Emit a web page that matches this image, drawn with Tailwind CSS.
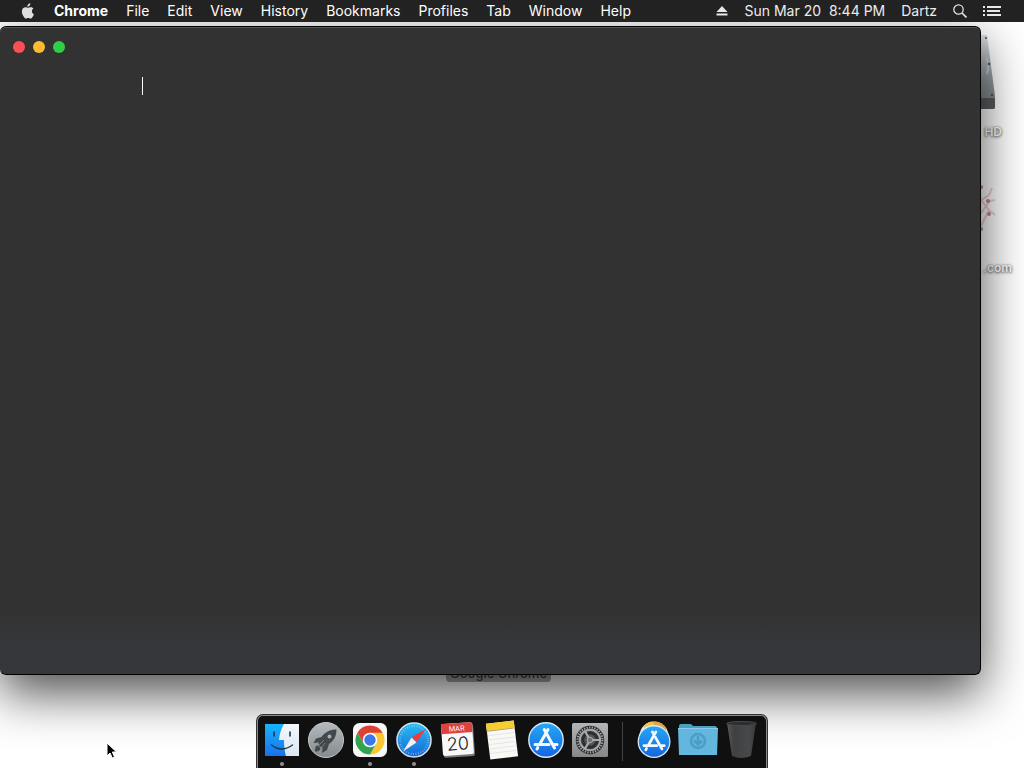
<!DOCTYPE html>
<html lang="en">
<head>
<meta charset="utf-8">
<title>Desktop</title>
<script src="https://cdn.jsdelivr.net/npm/@tailwindcss/browser@4"></script>
</head>
<body class="h-screen overflow-hidden bg-white font-['Inter','Liberation_Sans',sans-serif]">
<div class="relative flex h-full flex-col overflow-hidden">

  <!-- Menu bar -->
  <header class="z-30 flex h-[22px] shrink-0 items-center justify-between bg-[#222222] pr-[23px] pl-5 text-sm text-white">
    <nav class="flex items-center gap-[18px] whitespace-nowrap" aria-label="Application menu">
      <button class="h-4 w-4" aria-label="Apple menu">
        <svg viewBox="0 0 16 16" class="h-4 w-4" fill="#dedede"><path d="M10.300.2c.1 1-.3 1.900-.8 2.500-.6.7-1.400 1.100-2.200 1.100-.1-.9.3-1.800.8-2.400C8.700.7 9.600.3 10.300.2zM13.500 5.600c-1 .6-1.600 1.500-1.600 2.700 0 1.400.8 2.500 2 3-.3 1-.8 1.900-1.400 2.700-.6.9-1.200 1.600-2.100 1.600-.9 0-1.200-.5-2.200-.5s-1.300.5-2.200.5c-.9 0-1.600-.9-2.200-1.800C2.400 11.900 1.400 9 2.100 6.900c.5-1.600 1.800-2.700 3.300-2.700 1 0 1.900.6 2.600.6.600 0 1.700-.7 3-.6.600 0 1.800.2 2.500 1.400z"/></svg>
      </button>
      <button class="font-bold">Chrome</button>
      <button>File</button>
      <button>Edit</button>
      <button>View</button>
      <button>History</button>
      <button>Bookmarks</button>
      <button>Profiles</button>
      <button>Tab</button>
      <button>Window</button>
      <button>Help</button>
    </nav>
    <div class="flex items-center gap-4 whitespace-nowrap text-[#ececec]">
      <button aria-label="Eject"><svg viewBox="0 0 12 12" class="h-3 w-3" fill="#e8e8e8"><path d="M6 1l5.500 6H.5zM.5 8.500h11v2H.5z"/></svg></button>
      <time class="whitespace-pre">Sun Mar 20  8:44 PM</time>
      <button>Dartz</button>
      <button aria-label="Search"><svg viewBox="0 0 14 14" class="h-3.5 w-3.5" fill="none" stroke="#e0e0e0" stroke-width="1.300"><circle cx="5.500" cy="5.500" r="4.700"/><path d="M9 9l4.500 4.500" stroke-width="1.700"/></svg></button>
      <button aria-label="Notification Center"><svg viewBox="0 0 18 12" class="h-3 w-[18px]" fill="#e8e8e8"><path d="M0 1h2v2H0zM0 5h2v2H0zM0 9h2v2H0zM4 1h14v2H4zM4 5h13v2H4zM4 9h14v2H4z"/></svg></button>
    </div>
  </header>

  <!-- Desktop icons -->
  <div class="absolute top-[34px] right-3 flex w-24 flex-col items-center text-xs font-semibold text-white">
    <svg viewBox="0 0 66 76" class="mr-1 h-[76px] w-[66px]">
      <defs><linearGradient id="hd" x1="0" y1="0" x2="0" y2="1"><stop offset="0" stop-color="#dfe3e6"/><stop offset=".6" stop-color="#959da2"/><stop offset="1" stop-color="#7d8285"/></linearGradient></defs>
      <path d="M8 1h50l8 61v11q0 2-2 2H2q-2 0-2-2V62z" fill="url(#hd)"/>
      <path d="M0 64h66v9q0 2-2 2H2q-2 0-2-2z" fill="#5c5e60"/>
      <path d="M57 24q4 6 1 16" stroke="#ccd4da" fill="none" stroke-width="1.500"/>
      <g fill="#555"><circle cx="57" cy="4" r="1.100"/><circle cx="60" cy="30" r="1.300"/><circle cx="63" cy="61" r="1.300"/></g>
    </svg>
    <span class="mt-3 self-end pr-2.5 leading-5 [text-shadow:0_1px_3px_#555,0_0_2px_#888]">HD</span>
    <svg viewBox="0 0 70 56" class="mt-9 h-14 w-[70px]" fill="none" stroke="#f3cfd5" stroke-width="2">
      <path d="M44 7l8 15 8-5M52 22l8 10-8 16M60 17l3-7M60 32l6 5M52 35l9-12 5-1"/>
      <g fill="#c48791" stroke="none"><circle cx="52" cy="9" r="2"/><circle cx="59" cy="23" r="2"/><circle cx="60" cy="36" r="2"/><circle cx="52" cy="51" r="2"/></g>
    </svg>
    <span class="mt-6 self-end leading-5 [text-shadow:0_1px_3px_#555,0_0_2px_#888]">.com</span>
  </div>
  <span class="absolute top-[664px] left-[446px] rounded-sm bg-[#a8a8a8] px-1 text-[13px] leading-[18px] font-medium text-[#444]">Google Chrome</span>

  <!-- Application window -->
  <main class="absolute top-[26px] right-[43px] bottom-[93px] left-0 rounded-md border border-l-0 border-black bg-linear-to-b from-[#323232] from-90% to-[#36373a] to-95% shadow-[0_18px_50px_rgba(0,0,0,0.7),inset_0_1px_0_#555]">
    <div class="flex h-10 items-center gap-2 pl-[13px]">
      <button class="h-3 w-3 rounded-full bg-[#fb4f57]" aria-label="Close"></button>
      <button class="h-3 w-3 rounded-full bg-[#fdbb2f]" aria-label="Minimize"></button>
      <button class="h-3 w-3 rounded-full bg-[#2fce46]" aria-label="Zoom"></button>
    </div>
    <div class="mt-2.5 ml-[142px] h-[18px] w-px bg-white"></div>
  </main>

  <!-- Dock -->
  <footer class="z-20 mx-auto mt-auto flex h-[53px] shrink-0 gap-2 rounded-t-md border border-b-0 border-[#8a8a8a] bg-[#101010] px-1.5 pt-1.5 shadow-[0_0_0_1px_#333]">
    <button class="flex w-9 flex-col items-center gap-1" aria-label="Finder">
      <svg viewBox="0 0 36 36" class="h-9 w-9 overflow-visible">
        <defs><linearGradient id="fa" x1="0" y1="0" x2="0" y2="1"><stop offset="0" stop-color="#17b5fb"/><stop offset="1" stop-color="#1b70ec"/></linearGradient><linearGradient id="fb" x1="0" y1="0" x2="0" y2="1"><stop offset="0" stop-color="#f5f8fc"/><stop offset="1" stop-color="#dce6f2"/></linearGradient></defs>
        <path d="M1 2h34v32H1z" fill="url(#fb)"/><path d="M1 2h19c-3 5-4.500 10-5 16h5c0 6 .5 11 2 16H1z" fill="url(#fa)"/>
        <path d="M10 10v4M26 10v4" stroke="#173650" stroke-width="1.600" stroke-linecap="round"/>
        <path d="M7.500 23q10 8 21 0" fill="none" stroke="#173650" stroke-width="1.400" stroke-linecap="round"/>
      </svg><span class="h-1 w-1 rounded-full bg-[#929292]"></span>
    </button>
    <button class="flex w-9 flex-col items-center gap-1" aria-label="Launchpad">
      <svg viewBox="0 0 36 36" class="h-9 w-9">
        <defs><linearGradient id="la" x1="0" y1="0" x2="0" y2="1"><stop offset="0" stop-color="#b4babd"/><stop offset="1" stop-color="#858b8d"/></linearGradient></defs>
        <circle cx="18" cy="18" r="17.500" fill="url(#la)" stroke="#c4c9cb"/>
        <path d="M28.500 7.500C22 7.500 17 10 13.500 15L8 16.500 5.500 21l5-.5L11 24l3.500 1.500L14 31l5-3 2-6c5-3.500 7.500-8 7.500-14.500zM10 23.500c-2 0-3 1-3 6 4 0 5.500-1.500 5.500-3.500z" fill="#43484b"/>
        <circle cx="21.500" cy="14.500" r="2" fill="#a8afb2"/><path d="M11 23l5-5M14 25l3-4" stroke="#777d80"/>
      </svg>
    </button>
    <button class="flex w-9 flex-col items-center gap-1" aria-label="Chrome">
      <svg viewBox="0 0 36 36" class="h-9 w-9">
        <rect x="1" y="1" width="34" height="34" rx="6.500" fill="#f7f7f7"/>
        <path d="M18 18L5.440 10.750A14.500 14.500 0 0 1 30.560 10.750z" fill="#df4035"/>
        <path d="M18 10.750h12.560A14.500 14.500 0 0 1 18 32.500L24.280 21.600z" fill="#fbc735"/>
        <path d="M5.440 10.750L11.720 21.620 24.280 21.620 18 32.500A14.500 14.500 0 0 1 5.440 10.750z" fill="#32a350"/>
        <path d="M5.440 10.750L11.720 21.620 18 10.750z" fill="#df4035"/>
        <circle cx="18" cy="18" r="7.250" fill="#fff"/><circle cx="18" cy="18" r="5.700" fill="#3b78e7"/>
      </svg><span class="h-1 w-1 rounded-full bg-[#929292]"></span>
    </button>
    <button class="flex w-9 flex-col items-center gap-1" aria-label="Safari">
      <svg viewBox="0 0 36 36" class="h-9 w-9">
        <defs><linearGradient id="sa" x1="0" y1="0" x2="0" y2="1"><stop offset="0" stop-color="#25c0f4"/><stop offset="1" stop-color="#1765d9"/></linearGradient></defs>
        <circle cx="18" cy="18" r="17" fill="url(#sa)" stroke="#d4e2ea" stroke-width="1.500"/>
        <circle cx="18" cy="18" r="14" fill="none" stroke="#8fd0f4" stroke-width="2" stroke-dasharray=".6 1.840"/>
        <path d="M30 6.500L20.500 20.500 15.500 15.500z" fill="#ed3b3e"/><path d="M7 29.500l8.500-14 5 5z" fill="#f1f1f1"/>
      </svg><span class="h-1 w-1 rounded-full bg-[#929292]"></span>
    </button>
    <button class="flex w-9 flex-col items-center gap-1" aria-label="Calendar">
      <svg viewBox="0 0 36 36" class="h-9 w-9 overflow-visible">
        <g transform="rotate(-4 18 18)"><rect x="3" y="2" width="31" height="33" rx="2" fill="#777"/><rect x="2" y="1" width="31" height="32" rx="2" fill="#f8f8f8"/><path d="M2 11V3q0-2 2-2h27q2 0 2 2v8z" fill="#df423e"/>
        <text x="17.500" y="9" text-anchor="middle" font-family="Inter" font-size="7" fill="#fff">MAR</text><text x="17.500" y="28" text-anchor="middle" font-family="Inter" font-size="18" font-weight="300" fill="#222">20</text></g>
      </svg>
    </button>
    <button class="flex w-9 flex-col items-center gap-1" aria-label="Notes">
      <svg viewBox="0 0 36 36" class="h-9 w-9 overflow-visible">
        <g transform="rotate(-7 18 18)"><path d="M4 0h28v36H4z" fill="#f8f8f5"/><path d="M4 0h28v7H4z" fill="#f8cc2d"/><path d="M4 7.500h28" stroke="#b59d57"/><path d="M5 12h26M5 16.500h26M5 21h26M5 25.500h26M5 30h26" stroke="#dedede" stroke-width=".7"/></g>
      </svg>
    </button>
    <button class="flex w-9 flex-col items-center gap-1" aria-label="App Store">
      <svg viewBox="0 0 36 36" class="h-9 w-9 overflow-visible">
        <defs><linearGradient id="aa" x1="0" y1="0" x2="0" y2="1"><stop offset="0" stop-color="#24a9f7"/><stop offset="1" stop-color="#1565df"/></linearGradient></defs>
        <g id="store"><circle cx="18" cy="18" r="17.200" fill="url(#aa)" stroke="#d8e8f5" stroke-width="1.400"/>
        <path d="M16.200 7.500L26.500 26M20 7.500L11.800 22M9.800 25.500L9 27M7 22.500h14M25 22.500h4" fill="none" stroke="#f5f8fb" stroke-width="3" stroke-linecap="round"/></g>
      </svg>
    </button>
    <button class="flex w-9 flex-col items-center gap-1" aria-label="System Preferences">
      <svg viewBox="0 0 36 36" class="h-9 w-9">
        <defs><linearGradient id="pa" x1="0" y1="0" x2="0" y2="1"><stop offset="0" stop-color="#b2b6b8"/><stop offset="1" stop-color="#858789"/></linearGradient></defs>
        <rect y="1" width="36" height="34" rx="1.500" fill="url(#pa)"/><circle cx="18" cy="18" r="14.200" fill="#252729"/>
        <circle cx="18" cy="18" r="12.500" fill="none" stroke="#a8abad" stroke-width="2" stroke-dasharray="1.300 1.318"/>
        <circle cx="18" cy="18" r="10.200" fill="#55585a" stroke="#a4a6a8" stroke-width="2"/><circle cx="18" cy="18" r="7.200" fill="none" stroke="#2c2e30" stroke-width="3"/>
        <path d="M18 18h10M18 18L13 9.300M18 18l-5 8.700" stroke="#a9acae" stroke-width="2.200"/><circle cx="18" cy="18" r="2.800" fill="#6f7274" stroke="#a9acae"/>
      </svg>
    </button>
    <div class="flex w-3 justify-center" role="separator"><span class="h-[39px] w-px bg-[#444]"></span></div>
    <button class="flex w-9 flex-col items-center gap-1" aria-label="App Store, recent">
      <svg viewBox="0 0 36 36" class="h-9 w-9 overflow-visible">
        <circle cx="18" cy="14" r="14.500" fill="#e9e4d7"/><path d="M18-.5A14.500 14.500 0 0 1 31 7.500l-5 2L15 1z" fill="#dfa444"/><path d="M6 6A14.500 14.500 0 0 1 16-.4l3 3z" fill="#efc452"/>
        <use href="#store" transform="translate(1.500 3) scale(.92)"/>
      </svg>
    </button>
    <button class="flex w-9 flex-col items-center gap-1" aria-label="Downloads">
      <svg viewBox="0 0 36 36" class="h-9 w-9 overflow-visible">
        <path d="M-1 4q0-2 2-2h9q2 0 3 2h22q2 0 2 2v10H-1z" fill="#4b9fc4"/><path d="M-2 6h40l-1 27H-1z" fill="#63b6dd"/><path d="M-2 6.500h40" stroke="#87ccea"/>
        <g fill="none" stroke="#4b9dc3" stroke-width="2.500"><circle cx="18" cy="19" r="7"/><path d="M18 14v8M14 18.500l4 4 4-4"/></g>
      </svg>
    </button>
    <button class="flex w-9 flex-col items-center gap-1" aria-label="Trash">
      <svg viewBox="0 0 36 36" class="h-9 w-9 overflow-visible">
        <defs><linearGradient id="ta"><stop offset="0" stop-color="#56585a"/><stop offset=".25" stop-color="#3e4042"/><stop offset=".75" stop-color="#48494b"/><stop offset="1" stop-color="#38393b"/></linearGradient></defs>
        <path d="M3 1l5 33q9 4 19 0l5-33z" fill="url(#ta)"/><ellipse cx="17.500" cy="1.500" rx="15" ry="2" fill="#2c2d2e" stroke="#48494b"/>
      </svg>
    </button>
  </footer>

  <!-- Pointer -->
  <svg viewBox="0 0 12 18" class="pointer-events-none absolute top-[742px] left-[106px] z-40 h-[18px] w-3 overflow-visible" aria-hidden="true"><path d="M1 1v13l3-3 2.300 5 2.200-1-2.200-5h4.200z" fill="#000" stroke="#fff" stroke-width="1"/></svg>
</div>
</body>
</html>
